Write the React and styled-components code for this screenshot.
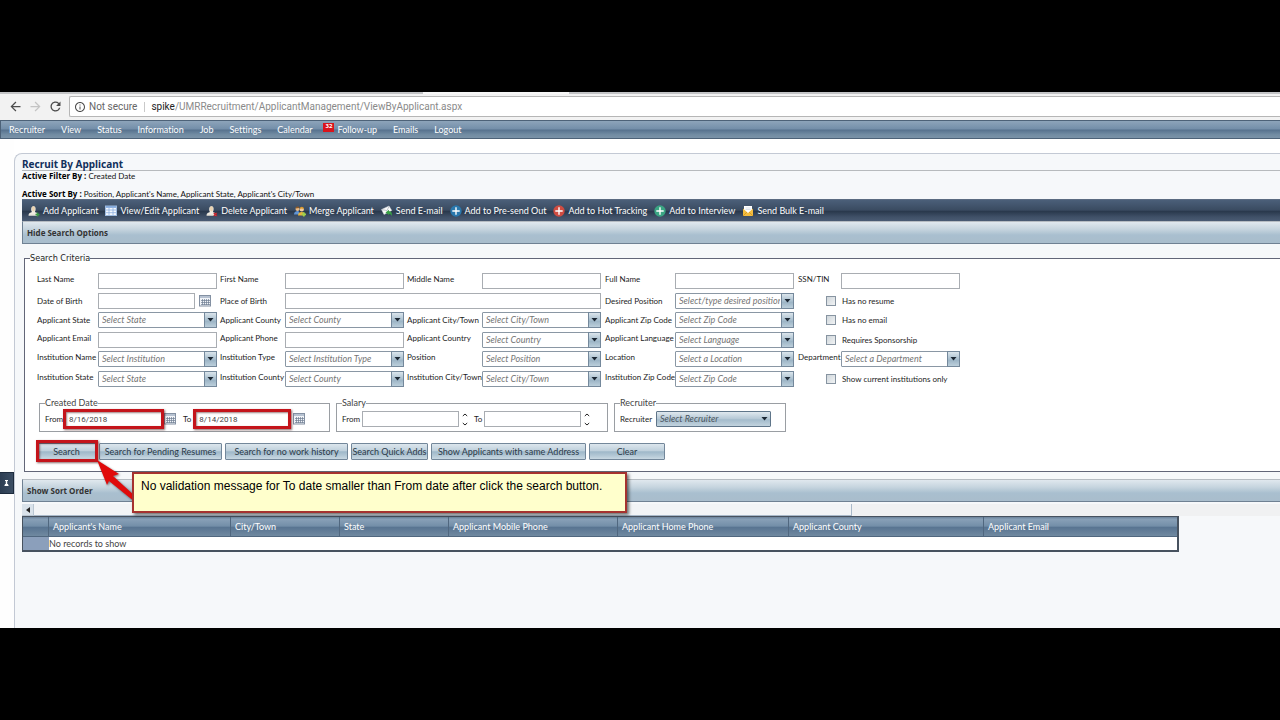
import React from "react";
import styled, { createGlobalStyle, css } from "styled-components";
import { MdArrowBack, MdArrowForward, MdRefresh, MdInfoOutline } from "react-icons/md";

const ui = `Lato, "Open Sans", sans-serif`;
const strong = `"Open Sans", sans-serif`;

const GlobalStyle = createGlobalStyle`
  *, *::before, *::after { box-sizing: border-box; }
  body { margin: 0; background: #000; font: 9px/12px ${ui}; color: #222; font-variant-ligatures: none; }
  button, input, select { font: inherit; color: inherit; margin: 0; font-variant-ligatures: none; }
`;

/* ---------- window frame ---------- */

const Screen = styled.div`
  min-height: 100vh;
  padding: 92px 0;
  display: flex;
  background: #000;
  overflow: hidden;
`;

const BrowserWindow = styled.div`
  flex: 1;
  min-width: 0;
  display: flex;
  flex-direction: column;
  background: #fff;
`;

const TabStrip = styled.div`
  height: 3px;
  display: flex;
  background: #f2f2f2;
`;

const Tab = styled.div`
  flex: ${(p) => p.$grow};
  border-top: 2px solid ${(p) => (p.$active ? "#f6f6f6" : "#c3c4c6")};
`;

const AddressRow = styled.div`
  height: 25px;
  padding: 1px 0 3px 8px;
  display: flex;
  align-items: center;
  gap: 5px;
  background: #f2f2f2;
`;

const BrowserButton = styled.button`
  width: 15px;
  height: 16px;
  padding: 0;
  border: 0;
  background: none;
  display: flex;
  align-items: center;
  justify-content: center;
  color: ${(p) => (p.disabled ? "#c4c4c4" : "#4c4c4c")};
  svg { flex: none; }
`;

const Omnibox = styled.div`
  flex: 1;
  height: 21px;
  margin-left: 1px;
  padding-left: 4px;
  display: flex;
  align-items: center;
  border: 1px solid #b6b6b6;
  border-right: 0;
  border-radius: 2px 0 0 2px;
  background: #fff;
  font: 10px/14px Roboto, sans-serif;
  color: #8a8a8a;
  svg { color: #4c4c4c; margin-right: 3px; }
  b { font-weight: 400; color: #222; }
`;

const Security = styled.span`
  padding-right: 7px;
  margin-right: 6px;
  border-right: 1px solid #c9c9c9;
  line-height: 10px;
  color: #666;
`;

/* ---------- navigation ---------- */

const NavBar = styled.nav`
  height: 19px;
  padding-left: 8px;
  display: flex;
  align-items: center;
  gap: 16px;
  border: 1px solid #4d6278;
  border-right: 0;
  background: linear-gradient(#8da4ba 0%, #738ea9 48%, #56718d 52%, #728ca3 80%, #7b93a8 100%);
`;

const NavLink = styled.a`
  position: relative;
  color: #fff;
  text-decoration: none;
  padding-left: ${(p) => (p.$badged ? 9 : 0)}px;
`;

const Badge = styled.span`
  position: absolute;
  left: -5px;
  top: -1px;
  width: 11px;
  height: 9px;
  background: #d9141c;
  color: #fff;
  font: bold 6px/6px ${strong};
  text-align: center;
`;

/* ---------- page ---------- */

const Workspace = styled.div`
  flex: 1;
  display: grid;
  grid-template-columns: 14px minmax(0, 1fr);
`;

const Rail = styled.aside`
  background: #fefefe;
`;

const PinTab = styled.button`
  display: flex;
  align-items: center;
  justify-content: center;
  width: 14px;
  height: 22px;
  margin-top: 333px;
  padding: 0;
  border: 1px solid #1d2b3d;
  border-left: 0;
  background: linear-gradient(90deg, #2c3d52, #3b4d63);
`;

const Panel = styled.main`
  margin-top: 14px;
  padding: 4px 0 0 7px;
  border: 1px solid #c3c9d4;
  border-width: 1px 0 0 1px;
  border-radius: 8px 0 0 0;
  background: #f6f8fa;
`;

const Title = styled.h1`
  margin: 0;
  border-bottom: 1px solid #b7babd;
  font: bold 10px/12px "Noto Sans", sans-serif;
  color: #12305c;
`;

const Status = styled.p`
  height: 10px;
  margin: 0 0 ${(p) => p.$gap || 0}px;
  font: 8px/10px ${ui};
  color: #111;
  b { font: bold 8px/8px ${strong}; color: #000; }
`;

const Toolbar = styled.div`
  height: 22px;
  padding-left: 6px;
  display: flex;
  align-items: center;
  gap: 7px;
  border-top: 1px solid #5b6b81;
  background: linear-gradient(#4b5f79 0%, #3a4b61 48%, #29384c 54%, #3f5067 80%, #4a5b73 100%);
`;

const Tool = styled.button`
  display: flex;
  align-items: center;
  gap: 3px;
  padding: 0;
  border: 0;
  background: none;
  color: #fff;
  white-space: nowrap;
  svg { flex: none; }
`;

const SectionBar = styled.button`
  display: block;
  width: 100%;
  height: 23px;
  padding: 0 4px;
  border: 1px solid #6f8193;
  border-top-color: #b6bcc2;
  border-right: 0;
  background: linear-gradient(#e0e8ee 0%, #c5d4de 35%, #a9bfcf 62%, #a9bdcc 100%);
  font: bold 8px/12px ${strong};
  color: #333;
  text-align: left;
`;

/* ---------- search form ---------- */

const Criteria = styled.fieldset`
  min-width: 0;
  margin: 8px 0 7px 2px;
  padding: 9px 0 11px 12px;
  border: 1px solid #626678;
  border-right: 0;
  background: #fff;
  background-clip: padding-box;
  > legend {
    margin-left: -7px;
    padding: 0;
    font: 9px/12px "DejaVu Sans Condensed", "DejaVu Sans", sans-serif;
  }
`;

const FieldGrid = styled.div`
  display: grid;
  grid-template-columns: 61px 122px 65px 122px 75px 123px 70px 123px 43px 119px;
  grid-template-rows: 16px 15px 16px 15px 16px 15px;
  row-gap: 4px;
  margin-bottom: 12px;
`;

const Label = styled.label`
  grid-column: ${(p) => p.$col || "auto"};
  grid-row: ${(p) => p.$row || "auto"};
  font: 8px/${(p) => (p.$high ? 12 : 16)}px ${ui};
  color: #1c1c1c;
  white-space: nowrap;
`;

const field = css`
  height: 16px;
  border: 1px solid #a9adb2;
  background: #fff;
  border-radius: 0;
  outline: 0;
`;

const TextBox = styled.input`
  ${field}
  width: ${(p) => (p.$w ? p.$w + "px" : "auto")};
  min-width: 0;
  padding: 0 3px;
  color: #444;
  font: 8px/14px Roboto, sans-serif;
`;

const Cell = styled.div`
  grid-column: ${(p) => p.$col};
  grid-row: ${(p) => p.$row};
  display: grid;
  grid-template-columns: ${(p) => p.$cols || "minmax(0, 1fr)"};
  align-items: start;
  column-gap: 4px;
  padding-right: ${(p) => p.$pad ?? 4}px;
`;

const Picker = styled.div`
  position: relative;
  display: grid;
  width: ${(p) => (p.$w ? p.$w + "px" : "auto")};
`;

const Select = styled.select`
  ${field}
  appearance: none;
  width: 100%;
  padding: 0 13px 0 3px;
  border-color: #8a97a4;
  border-radius: 1px;
  font: italic 9px/14px ${ui};
  color: #757575;
  ${(p) =>
    p.$filled &&
    css`
      background: linear-gradient(#dfe8ee, #b4c7d5 50%, #a3bbcb 55%, #c2d3de);
      border-color: #5f7589;
      color: #4c5660;
    `}
`;

const Cap = styled.span`
  position: absolute;
  right: 0;
  top: 0;
  width: 13px;
  height: 16px;
  display: flex;
  align-items: center;
  justify-content: center;
  pointer-events: none;
  ${(p) =>
    !p.$plain &&
    css`
      border: 1px solid #74889b;
      background: linear-gradient(#dbe5ec, #a9bfce 50%, #9db5c6 60%, #bccfdb);
    `}
`;

const CalendarButton = styled.button`
  width: 12px;
  height: 12px;
  padding: 0;
  border: 0;
  background: none;
  display: flex;
  align-self: center;
`;

const Check = styled.div`
  grid-column: 9 / 11;
  grid-row: ${(p) => p.$row};
  height: 16px;
  display: flex;
  align-items: center;
  gap: 6px;
  padding-left: 28px;
`;

const CheckBox = styled.input`
  appearance: none;
  width: 10px;
  height: 10px;
  border: 1px solid #8794a1;
  background: linear-gradient(135deg, #cfd6db, #f1f3f4);
`;

const Groups = styled.div`
  display: flex;
  gap: 6px;
  margin: 0 0 11px 2px;
`;

const Group = styled.fieldset`
  width: ${(p) => p.$w}px;
  min-width: 0;
  margin: 0;
  padding: 3px 5px 4px;
  border: 1px solid #9a9ea3;
  legend { padding: 0; font: 9px/10px ${ui}; color: #444; }
`;

const GroupRow = styled.div`
  display: flex;
  align-items: center;
  gap: ${(p) => p.$gap || 3}px;
`;

const Pair = styled.div`
  display: flex;
  align-items: center;
  gap: ${(p) => p.$gap || 2}px;
`;

const Marked = styled.div`
  position: relative;
  display: flex;
  &::after {
    content: "";
    position: absolute;
    inset: ${(p) => p.$inset || "-2px"};
    border: 3px solid #c4141b;
    box-shadow: 1px 1px 2px rgba(60, 0, 0, 0.6), inset 1px 1px 2px rgba(60, 0, 0, 0.5);
    pointer-events: none;
    z-index: 1;
  }
`;

const Spinner = styled.span`
  display: flex;
  flex-direction: column;
  justify-content: space-between;
  height: 13px;
  margin-left: 1px;
`;

const SpinButton = styled.button`
  padding: 0;
  border: 0;
  background: none;
  display: flex;
`;

const Actions = styled.div`
  position: relative;
  display: flex;
  gap: 3px;
`;

const ActionButton = styled.button`
  width: ${(p) => p.$w}px;
  height: 17px;
  padding: 0;
  border: 1px solid #73879a;
  border-radius: 1px;
  background: linear-gradient(#dce6ed 0%, #bfd0dc 45%, #9fb8c9 52%, #b1c6d4 75%, #c9d8e2 100%);
  color: #2c3a49;
  white-space: nowrap;
`;

const Callout = styled.div`
  position: absolute;
  z-index: 3;
  left: 95px;
  top: 29px;
  width: 495px;
  height: 41px;
  padding: 5px 7px;
  border: 2px solid #a5322f;
  background: #ffffcc;
  box-shadow: 2px 2px 3px rgba(0, 0, 0, 0.55);
  font: 12px/14px "Liberation Sans", Arial, sans-serif;
  color: #000;
  white-space: nowrap;
`;

const Pointer = styled.svg`
  position: absolute;
  z-index: 2;
  left: 60px;
  top: 17px;
  filter: drop-shadow(1px 1px 1px rgba(0, 0, 0, 0.5));
`;

/* ---------- results ---------- */

const ScrollTrack = styled.div`
  height: 12px;
  margin-top: 2px;
  display: flex;
  background: #f0f1f2;
`;

const ScrollButton = styled.button`
  width: 12px;
  padding: 0;
  border: 1px solid #b9c6d2;
  border-width: 0 1px 1px 0;
  background: #d9e2ea;
  display: flex;
  align-items: center;
  justify-content: center;
`;

const Thumb = styled.div`
  width: 65%;
  border: 1px solid #a9b9c9;
  border-width: 0 1px 1px 0;
  background: #f2f4f6;
`;

const Results = styled.table`
  width: 1157px;
  table-layout: fixed;
  border-collapse: separate;
  border-spacing: 0;
  border: 2px solid #47525f;
  border-width: 1px 2px 2px 1px;
  background: #fff;
`;

const Head = styled.th`
  width: ${(p) => p.$w}px;
  height: 20px;
  padding: 0 4px;
  border-right: 1px solid #50677f;
  border-bottom: 1px solid #50677f;
  background: linear-gradient(#6b829a 0%, #88a0b7 12%, #738ea8 48%, #587491 54%, #7089a0 100%);
  color: #fff;
  font-weight: 400;
  text-align: left;
  white-space: nowrap;
  &:last-child { border-right: 0; }
`;

const Data = styled.td`
  height: 13px;
  padding: 0;
  line-height: 12px;
  color: #444;
  background: ${(p) => (p.$marker ? "#8b9fbb" : "#fff")};
`;

/* ---------- drawings ---------- */

const Caret = () => (
  <svg width="7" height="4" viewBox="0 0 7 4" aria-hidden="true">
    <path d="M.5 0h6L3.500 3.500z" fill="#1b2733" />
  </svg>
);

const CalendarIcon = () => (
  <svg width="12" height="12" viewBox="0 0 12 12" aria-hidden="true">
    <rect x=".5" y=".5" width="11" height="10.500" fill="#f1f4f8" stroke="#8390a2" />
    <path d="M1 2h10" stroke="#a3b2c4" strokeWidth="1.500" />
    <path d="M3.500 4v6M5.500 4v6M7.500 4v6M9.500 4v6M2 5.500h9M2 7.500h9M2 9.500h9" stroke="#6f7d92" strokeWidth=".7" />
  </svg>
);

const Person = ({ mark }) => (
  <svg width="12" height="12" viewBox="0 0 12 12" aria-hidden="true">
    <path d="M.5 10.500C.5 8 2.500 7.500 4 7c-1-.8-1.500-5.800 1.500-5.800S7.800 6 6.800 7c1.700.5 3.400 1 3.400 3.500z" fill="#f1ece2" />
    <path d="M3.800 2.200Q5.500.2 7 2.200L6.800 5.500 5.600 6.500 4.200 5.500z" fill="#ead3b2" />
    <path d="M.8 10.300h8.500" stroke="#c8c8c4" />
    {mark === "add" ? (
      <path d="M9.500 7.500v4M7.500 9.500h4" stroke="#3c9a45" strokeWidth="1.600" />
    ) : (
      <path d="M7.800 8l3 3M10.800 8l-3 3" stroke="#c5222b" strokeWidth="1.400" />
    )}
  </svg>
);

const GridIcon = () => (
  <svg width="12" height="12" viewBox="0 0 12 12" aria-hidden="true">
    <rect x=".5" y="1" width="11" height="9.500" fill="#f2f7fd" stroke="#9dbbe0" />
    <path d="M1 2h10" stroke="#6f9bd6" strokeWidth="1.500" />
    <path d="M1 5h10M1 7.700h10M4 3v7M8 3v7" stroke="#8db0e0" strokeWidth=".8" />
  </svg>
);

const PeopleIcon = () => (
  <svg width="12" height="12" viewBox="0 0 12 12" aria-hidden="true">
    <path d="M0 9.500C0 7 1.500 6.500 3 6h1.500L6 9.500z" fill="#5f93d4" />
    <circle cx="3.500" cy="4" r="2" fill="#e9bd8c" />
    <path d="M1.500 3.500C1.800 1 5 1 5.400 3z" fill="#8f5a26" />
    <path d="M4 10.500C4 8 5.500 7 7.500 7s3.500 1 3.500 3.500z" fill="#e8b43c" />
    <circle cx="7.800" cy="4.500" r="2.100" fill="#f3cc9c" />
    <path d="M5.600 4C6 1 9.700 1 10 4 8.500 3.500 7 3 5.600 4z" fill="#d9982c" />
    <path d="M9.800 7.200v4.300M7.700 9.300H12" stroke="#9fd14b" strokeWidth="1.700" />
  </svg>
);

const SendIcon = () => (
  <svg width="12" height="12" viewBox="0 0 12 12" aria-hidden="true">
    <path d="M.5 4.500L8 1l2.800 4.500L3 9.500z" fill="#fbfbfb" stroke="#cfd5da" strokeWidth=".5" />
    <path d="M1 4.700l5 .8L8 1.500" fill="none" stroke="#a6afb8" strokeWidth=".7" />
    <path d="M4.500 7.500L8 4.800v1.500c2.500 0 3.500 2 2.500 5-.3-1.800-1-2.500-2.500-2.400V10z" fill="#38a046" />
  </svg>
);

const PlusDisc = ({ color }) => (
  <svg width="12" height="12" viewBox="0 0 12 12" aria-hidden="true">
    <circle cx="6" cy="6" r="5.700" fill={color} />
    <path d="M6 2.300v7.400M2.300 6h7.400" stroke="#fff" strokeWidth="1.400" />
  </svg>
);

const BulkIcon = () => (
  <svg width="12" height="12" viewBox="0 0 12 12" aria-hidden="true">
    <rect x="2" y="1" width="8" height="7" fill="#fff" />
    <path d="M1 3.500V11h10V3.500L6 8z" fill="#f3bd3f" />
    <path d="M1 11l4-4M11 11L7 7" stroke="#cf8f1b" strokeWidth=".7" />
    <path d="M3.500 3h5M3.500 4.500h5" stroke="#c6d0db" strokeWidth=".6" />
  </svg>
);

const PinIcon = () => (
  <svg width="5" height="6" viewBox="0 0 5 6" aria-hidden="true">
    <path d="M1 .5h3M2.500 1v3M1 4.500h3" stroke="#fff" strokeWidth="1" />
    <path d="M.5 5.500h4M2.500 1v4" stroke="#fff" strokeWidth="1.500" />
  </svg>
);

const Chevron = ({ up }) => (
  <svg width="6" height="4" viewBox="0 0 6 4" aria-hidden="true">
    <path d={up ? "M.8 3L3 1l2.200 2" : "M.8 1L3 3l2.200-2"} fill="none" stroke="#222" strokeWidth="1" />
  </svg>
);

/* ---------- content ---------- */

const tools = [
  ["Add Applicant", <Person mark="add" />],
  ["View/Edit Applicant", <GridIcon />],
  ["Delete Applicant", <Person mark="remove" />],
  ["Merge Applicant", <PeopleIcon />],
  ["Send E-mail", <SendIcon />],
  ["Add to Pre-send Out", <PlusDisc color="#2a78ad" />],
  ["Add to Hot Tracking", <PlusDisc color="#cf4c41" />],
  ["Add to Interview", <PlusDisc color="#3aa583" />],
  ["Send Bulk E-mail", <BulkIcon />],
];

/* [label, row, label column, placeholder]; no placeholder makes a plain text box */
const fields = [
  ["Last Name", 1, 1], ["First Name", 1, 3], ["Middle Name", 1, 5], ["Full Name", 1, 7], ["SSN/TIN", 1, 9],
  ["Desired Position", 2, 7, "Select/type desired position"],
  ["Applicant State", 3, 1, "Select State"], ["Applicant County", 3, 3, "Select County"],
  ["Applicant City/Town", 3, 5, "Select City/Town"], ["Applicant Zip Code", 3, 7, "Select Zip Code"],
  ["Applicant Email", 4, 1], ["Applicant Phone", 4, 3],
  ["Applicant Country", 4, 5, "Select Country"], ["Applicant Language", 4, 7, "Select Language"],
  ["Institution Name", 5, 1, "Select Institution"], ["Institution Type", 5, 3, "Select Institution Type"],
  ["Position", 5, 5, "Select Position"], ["Location", 5, 7, "Select a Location"],
  ["Department", 5, 9, "Select a Department"],
  ["Institution State", 6, 1, "Select State"], ["Institution County", 6, 3, "Select County"],
  ["Institution City/Town", 6, 5, "Select City/Town"], ["Institution Zip Code", 6, 7, "Select Zip Code"],
];

const checks = [
  ["Has no resume", 2], ["Has no email", 3], ["Requires Sponsorship", 4], ["Show current institutions only", 6],
];

const columns = [
  ["", 26], ["Applicant's Name", 182], ["City/Town", 109], ["State", 109], ["Applicant Mobile Phone", 169],
  ["Applicant Home Phone", 171], ["Applicant County", 195], ["Applicant Email", 193],
];

const slug = (s) => s.toLowerCase().replace(/[^a-z]+/g, "-");
const lastPad = (col) => (col === 9 ? 0 : col < 5 ? 3 : 4);

function Field({ label, row, col, placeholder }) {
  const id = slug(label);
  return (
    <>
      <Label htmlFor={id} $row={row} $col={col} $high={row !== 2 && row !== 3}>{label}</Label>
      <Cell $row={row} $col={col + 1} $pad={lastPad(col)}>
        {placeholder ? (
          <Picker>
            <Select id={id}><option>{placeholder}</option></Select>
            <Cap><Caret /></Cap>
          </Picker>
        ) : (
          <TextBox id={id} />
        )}
      </Cell>
    </>
  );
}

function Amount({ id, label }) {
  return (
    <Pair>
      <Label htmlFor={id}>{label}</Label>
      <TextBox id={id} $w={97} />
      <Spinner>
        <SpinButton type="button" aria-label={`${label} up`}><Chevron up /></SpinButton>
        <SpinButton type="button" aria-label={`${label} down`}><Chevron /></SpinButton>
      </Spinner>
    </Pair>
  );
}

export default function App() {
  return (
    <Screen>
      <GlobalStyle />
      <BrowserWindow>
        <TabStrip><Tab $grow={423} /><Tab $grow={146} $active /><Tab $grow={711} /></TabStrip>
        <AddressRow>
          <BrowserButton aria-label="Back"><MdArrowBack size={15} /></BrowserButton>
          <BrowserButton aria-label="Forward" disabled><MdArrowForward size={15} /></BrowserButton>
          <BrowserButton aria-label="Reload"><MdRefresh size={15} /></BrowserButton>
          <Omnibox>
            <MdInfoOutline size={12} />
            <Security>Not secure</Security>
            <span><b>spike</b>/UMRRecruitment/ApplicantManagement/ViewByApplicant.aspx</span>
          </Omnibox>
        </AddressRow>

        <NavBar>
          {["Recruiter", "View", "Status", "Information", "Job", "Settings", "Calendar"].map((t) => (
            <NavLink key={t} href="#">{t}</NavLink>
          ))}
          <NavLink href="#" $badged><Badge>32</Badge>Follow-up</NavLink>
          <NavLink href="#">Emails</NavLink>
          <NavLink href="#">Logout</NavLink>
        </NavBar>

        <Workspace>
          <Rail><PinTab aria-label="Pin panel"><PinIcon /></PinTab></Rail>
          <Panel>
            <Title>Recruit By Applicant</Title>
            <Status $gap={8}><b>Active Filter By :</b> Created Date</Status>
            <Status><b>Active Sort By :</b> Position, Applicant's Name, Applicant State, Applicant's City/Town</Status>
            <Toolbar>
              {tools.map(([name, icon]) => <Tool key={name}>{icon}{name}</Tool>)}
            </Toolbar>
            <SectionBar>Hide Search Options</SectionBar>

            <Criteria>
              <legend>Search Criteria</legend>
              <FieldGrid>
                {fields.map(([label, row, col, placeholder]) => (
                  <Field key={label} label={label} row={row} col={col} placeholder={placeholder} />
                ))}
                <Label htmlFor="birth-date" $row={2} $col={1}>Date of Birth</Label>
                <Cell $row={2} $col={2} $cols="97px 12px">
                  <TextBox id="birth-date" />
                  <CalendarButton type="button" aria-label="Pick date of birth"><CalendarIcon /></CalendarButton>
                </Cell>
                <Label htmlFor="birth-place" $row={2} $col={3}>Place of Birth</Label>
                <Cell $row={2} $col="4 / 7"><TextBox id="birth-place" /></Cell>
                {checks.map(([label, row]) => (
                  <Check key={label} $row={row}>
                    <CheckBox type="checkbox" id={slug(label)} />
                    <Label htmlFor={slug(label)}>{label}</Label>
                  </Check>
                ))}
              </FieldGrid>

              <Groups>
                <Group $w={291}>
                  <legend>Created Date</legend>
                  <GroupRow $gap={7}>
                    <Pair>
                      <Label htmlFor="created-from">From</Label>
                      <Marked><TextBox id="created-from" $w={97} defaultValue="8/16/2018" /></Marked>
                      <CalendarButton type="button" aria-label="Pick from date"><CalendarIcon /></CalendarButton>
                    </Pair>
                    <Pair $gap={4}>
                      <Label htmlFor="created-to">To</Label>
                      <Marked><TextBox id="created-to" $w={94} defaultValue="8/14/2018" /></Marked>
                      <CalendarButton type="button" aria-label="Pick to date"><CalendarIcon /></CalendarButton>
                    </Pair>
                  </GroupRow>
                </Group>
                <Group $w={272}>
                  <legend>Salary</legend>
                  <GroupRow $gap={6}>
                    <Amount id="salary-from" label="From" />
                    <Amount id="salary-to" label="To" />
                  </GroupRow>
                </Group>
                <Group $w={172}>
                  <legend>Recruiter</legend>
                  <Pair $gap={4}>
                    <Label htmlFor="recruiter">Recruiter</Label>
                    <Picker $w={115}>
                      <Select id="recruiter" $filled><option>Select Recruiter</option></Select>
                      <Cap $plain><Caret /></Cap>
                    </Picker>
                  </Pair>
                </Group>
              </Groups>

              <Actions>
                <Marked $inset="-3px -2px -2px -1px"><ActionButton $w={59}>Search</ActionButton></Marked>
                <ActionButton $w={123}>Search for Pending Resumes</ActionButton>
                <ActionButton $w={123}>Search for no work history</ActionButton>
                <ActionButton $w={77}>Search Quick Adds</ActionButton>
                <ActionButton $w={155}>Show Applicants with same Address</ActionButton>
                <ActionButton $w={76}>Clear</ActionButton>
                <Pointer width="38" height="44" viewBox="0 0 38 44" aria-hidden="true">
                  <path d="M0 0L22 14 16 16 38 36V42L12 21 10 25z" fill="#e00b0b" />
                </Pointer>
                <Callout role="note">
                  No validation message for To date smaller than From date after click the search button.
                </Callout>
              </Actions>
            </Criteria>

            <SectionBar>Show Sort Order</SectionBar>
            <ScrollTrack>
              <ScrollButton aria-label="Scroll left">
                <svg width="4" height="6" viewBox="0 0 4 6" aria-hidden="true"><path d="M4 0v6L0 3z" fill="#222" /></svg>
              </ScrollButton>
              <Thumb />
            </ScrollTrack>
            <Results>
              <thead>
                <tr>{columns.map(([name, w]) => <Head key={name} $w={w}>{name}</Head>)}</tr>
              </thead>
              <tbody>
                <tr><Data $marker /><Data colSpan={7}>No records to show</Data></tr>
              </tbody>
            </Results>
          </Panel>
        </Workspace>
      </BrowserWindow>
    </Screen>
  );
}
